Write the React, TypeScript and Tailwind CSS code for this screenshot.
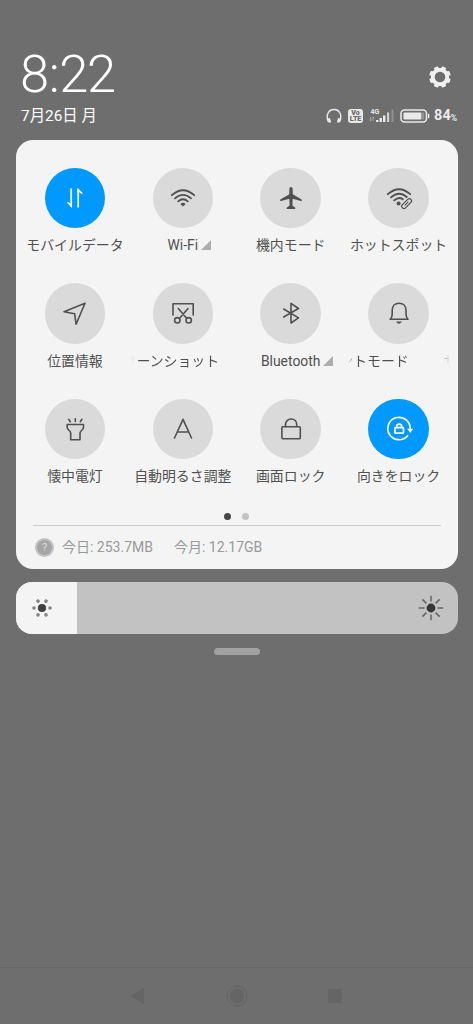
// src/App.tsx
import React from 'react';

interface Tile {
  label: string;
  icon: React.ReactNode;
  active?: boolean;
  expandable?: boolean;
  // Desplazamiento actual de la etiqueta cuando no cabe
  scroll?: string;
  next?: string;
}

const Icon: React.FC<{ children: React.ReactNode }> = ({ children }) => (
  <svg
    className="w-[30px] h-[30px]"
    viewBox="0 0 30 30"
    fill="none"
    stroke="currentColor"
    strokeWidth="1.6"
    strokeLinecap="round"
    strokeLinejoin="round"
  >
    {children}
  </svg>
);

const tiles: Tile[] = [
  {
    label: 'モバイルデータ',
    active: true,
    icon: (
      <Icon>
        <path d="M11.2 5.5V24M18.2 24.5V5.8" strokeWidth="1.7" strokeLinecap="butt" />
        <path d="M12 25v-5.500l-1.500 1.300-2.800-2-.7 1zM17.400 5v5.500l1.500-1.300 3.200 1.800.7-1z" fill="currentColor" stroke="none" />
      </Icon>
    ),
  },
  {
    label: 'Wi-Fi',
    expandable: true,
    icon: (
      <Icon>
        <path d="M3.8 12.2Q15 2.2 26.2 12.2M7 15.4Q15 8.4 23 15.4M10.2 18.4Q15 14.2 19.8 18.4" strokeWidth="1.8" />
        <path d="M15 23.6l-2.6-2.6Q15 18.4 17.6 21z" fill="currentColor" stroke="none" />
      </Icon>
    ),
  },
  {
    label: '機内モード',
    icon: (
      <Icon>
        <path
          d="M15 4c1.100 0 1.700 1.200 1.700 2.600v4.600l9 5.200v1.800l-9-2.500-.3 6.800 2.900 2.300v1.100h-8.600v-1.100l2.900-2.300-.3-6.800-9 2.500v-1.800l9-5.200V6.600c0-1.400.6-2.600 1.700-2.600z"
          fill="currentColor"
          stroke="none"
        />
      </Icon>
    ),
  },
  {
    label: 'ホットスポット',
    icon: (
      <Icon>
        <path d="M3.8 11.2Q15 1.2 26.2 11.2M7 14.4Q15 7.4 22.8 14M10.2 17.4Q15 13.2 18.8 16.2" strokeWidth="1.8" />
        <circle cx="14.6" cy="20.4" r="2" fill="currentColor" stroke="none" />
        <rect x="16.7" y="18.5" width="12" height="4.4" rx="2.2" transform="rotate(-45 22.5 20.7)" strokeWidth="1.2" />
        <path d="M21 22.2l3-3" strokeWidth="1.1" />
      </Icon>
    ),
  },
  {
    label: '位置情報',
    icon: (
      <Icon>
        <path d="M25 5.3L4 13.8l10.6 1.9 1.5 10.6z" />
      </Icon>
    ),
  },
  {
    label: 'スクリーンショット',
    scroll: '-translate-x-[37px]',
    icon: (
      <Icon>
        <path d="M5 17V5.7h20.2V17M10.3 10.5l8.3 9.7M20 10.5l-8.3 9.7" strokeWidth="1.6" />
        <circle cx="9.3" cy="22.3" r="2.7" />
        <circle cx="20.7" cy="22.3" r="2.7" />
      </Icon>
    ),
  },
  {
    label: 'Bluetooth',
    expandable: true,
    icon: (
      <Icon>
        <path d="M7.7 11L22.5 19.9 15 25V5.3l7.5 5.2L7.7 19" />
      </Icon>
    ),
  },
  {
    label: 'サイレントモード',
    scroll: '-translate-x-[50px]',
    next: 'サ',
    icon: (
      <Icon>
        <path d="M6.2 21.3h17.8c-1.5-1.6-2-2.8-2-4.8v-4.3c0-4.2-2.9-7-6.9-7s-6.9 2.8-6.9 7v4.3c0 2-.5 3.2-2 4.800z" />
        <path d="M12.3 23.5h5.400c-.5 1.400-1.500 2.200-2.700 2.200s-2.200-.8-2.700-2.200z" fill="currentColor" stroke="none" />
      </Icon>
    ),
  },
  {
    label: '懐中電灯',
    icon: (
      <Icon>
        <path d="M7.2 10.5h16.300v3c0 2.400-3.500 3.200-3.500 5.700v6.600h-9.300v-6.600c0-2.500-3.500-3.300-3.500-5.700z" />
        <path d="M15.3 4.700v2.800M8.700 5.300l1.600 2.400M21.900 5.300l-1.600 2.400" />
      </Icon>
    ),
  },
  {
    label: '自動明るさ調整',
    icon: (
      <Icon>
        <path d="M6.5 24L15 5.3 23.5 24M9.3 18h11.4" strokeWidth="1.6" />
      </Icon>
    ),
  },
  {
    label: '画面ロック',
    icon: (
      <Icon>
        <rect x="5.9" y="12.7" width="18.4" height="12" rx="1" />
        <path d="M9.5 12.5v-2c0-3.100 2.400-5.500 5.600-5.500s5.600 2.400 5.600 5.500v2" />
      </Icon>
    ),
  },
  {
    label: '向きをロック',
    active: true,
    icon: (
      <Icon>
        <path d="M23.6 21.7A11.2 11.2 0 1 1 26.2 14.5" strokeWidth="1.7" />
        <path d="M23.2 14.7h6l-3 4.3z" fill="currentColor" stroke="none" />
        <rect x="10.9" y="13.7" width="8.6" height="5.5" rx=".6" strokeWidth="1.7" />
        <path d="M12.7 13.500v-.9c0-1.500 1-2.500 2.500-2.500s2.500 1 2.500 2.500v.9" strokeWidth="1.6" />
      </Icon>
    ),
  },
];

const StatusIcons: React.FC = () => (
  <div className="flex items-center h-[18px] text-[#e9e9e9]">
    <svg className="w-4 h-4" viewBox="0 0 16 16" fill="none" stroke="currentColor" strokeWidth="1.4">
      <path d="M2.5 14C-.5 8 2 1.5 8 1.5S16.5 8 13.5 14" />
      <path d="M1.2 10.5l2.8-.5 1.2 4.3-2.5.5zM14.8 10.5L12 10l-1.200 4.300 2.500.5z" fill="currentColor" stroke="none" />
    </svg>
    <div className="ml-[6px] w-[15px] h-[14px] rounded-[3px] bg-[#e9e9e9] text-[#686868] font-black text-[7px] leading-[6px] text-center pt-px">
      <div>Vo</div>
      <div>LTE</div>
    </div>
    <svg className="ml-[6px] w-[26px] h-4" viewBox="0 0 26 16" fill="currentColor">
      <text x="1.5" y="5.5" fontSize="7" fontWeight="700">4G</text>
      <path d="M1.7 9v4l-1.2-1M4 13V9l1.2 1" fill="none" stroke="currentColor" strokeWidth=".8" opacity=".6" />
      <path d="M7 14v-2h2.4v2zM10.5 14v-4h2.4v4zM14 14V7.5h2.4V14z" />
      <path d="M18 14V4.5h2.2V14z" opacity=".8" />
      <path d="M22.5 14V1.5h2V14z" opacity=".3" />
    </svg>
    <svg className="ml-[5px] w-[30px] h-[14px]" viewBox="0 0 30 14">
      <rect x="1" y="1" width="25.5" height="12" rx="3.5" fill="none" stroke="currentColor" strokeWidth="1.6" />
      <rect x="3.5" y="3.5" width="18" height="7" rx="1" fill="currentColor" />
      <rect x="21.5" y="3.5" width="2.7" height="7" rx=".8" fill="#929292" />
      <path d="M28 4.8h.4a1 1 0 0 1 1 1v2.4a1 1 0 0 1-1 1H28z" fill="currentColor" />
    </svg>
    <span className="ml-[4px] text-[14.5px] leading-[18px] font-bold">84</span>
    <span className="text-[8.5px] leading-none font-bold mt-[5px]">%</span>
  </div>
);

const QuickTile: React.FC<{ tile: Tile }> = ({ tile }) => (
  <div className="flex flex-col items-center h-[115.6px]">
    <div
      className={
        tile.active
          ? 'w-[60.5px] h-[60.5px] shrink-0 rounded-full flex items-center justify-center bg-[#0099ff] text-white'
          : 'w-[60.5px] h-[60.5px] shrink-0 rounded-full flex items-center justify-center bg-[#dadada] text-[#505050]'
      }
    >
      {tile.icon}
    </div>
    {tile.scroll ? (
      <div className="mt-[7px] w-[102px] h-5 overflow-hidden text-[13.9px] leading-5 whitespace-nowrap text-[#505050] [mask-image:linear-gradient(to_right,transparent,black_8px,black_90px,transparent)]">
        <div className={`flex gap-[35px] ${tile.scroll}`}>
          <span>{tile.label}</span>
          {tile.next && <span aria-hidden="true">{tile.next}</span>}
        </div>
      </div>
    ) : (
      <div className="mt-[7px] h-5 flex items-center text-[13.9px] leading-5 whitespace-nowrap text-[#505050]">
        {tile.label}
        {tile.expandable && (
          <svg className="ml-[3px] -mr-[13px] w-[10px] h-[10px]" viewBox="0 0 10 10">
            <path d="M10 0v10H0z" fill="#adadad" />
          </svg>
        )}
      </div>
    )}
  </div>
);

const App: React.FC = () => {
  return (
    <div className="w-[473px] h-[1024px] flex flex-col bg-[#6e6e6e] overflow-hidden font-[Roboto,'Noto_Sans_CJK_JP',sans-serif]">
      {/* Cabecera */}
      <header className="h-[140px] shrink-0 pt-[46px] pl-[20px] pr-[16px] text-white">
        <div className="flex items-center justify-between h-[56px]">
          <div className="text-[52.5px] leading-[56px] font-light tracking-[-1.3px]">
            8<span className="mx-[0.8px]">:</span>22
          </div>
          <svg className="w-[22px] h-[22px] mr-[6px] mt-[6px]" viewBox="-11 -11 22 22" fill="#f0f0f0">
            {[22.5, 67.5, 112.5, 157.5, 202.5, 247.5, 292.5, 337.5].map((deg) => (
              <rect key={deg} x="-2.4" y="-10.8" width="4.8" height="4.5" rx="1.2" transform={`rotate(${deg})`} />
            ))}
            <circle r="7.2" fill="none" stroke="#f0f0f0" strokeWidth="3.8" />
          </svg>
        </div>
        <div className="flex items-center justify-between h-[28px]">
          <div className="pl-px text-[15.4px] leading-[20px]">7月26日 月</div>
          <StatusIcons />
        </div>
      </header>

      {/* Panel de ajustes rápidos */}
      <section className="mx-4 w-[441.5px] h-[429px] shrink-0 rounded-[17px] bg-[#f4f4f4] flex flex-col">
        <div className="grid grid-cols-4 px-[5px] pt-[27.5px]">
          {tiles.map((tile) => (
            <QuickTile key={tile.label} tile={tile} />
          ))}
        </div>
        <div className="flex justify-center gap-[11px] h-[7px] -mt-[1.5px]">
          <span className="w-[7px] h-[7px] rounded-full bg-[#454545]" />
          <span className="w-[7px] h-[7px] rounded-full bg-[#c3c3c3]" />
        </div>
        <div className="mx-[17px] mt-[5px] h-px bg-[#cccccc]" />
        <div className="flex items-center h-[43px] pl-[19px] text-[14px] text-[#999999]">
          <span className="w-[19px] h-[19px] rounded-full border-2 border-[#c2c2c2] bg-[#a5a5a5] text-[#dedede] text-[11px] leading-[15px] text-center">
            ?
          </span>
          <span className="ml-2">今日: 253.7MB</span>
          <span className="ml-[21px]">今月: 12.17GB</span>
        </div>
      </section>

      {/* Brillo */}
      <div className="mx-4 mt-[12.5px] w-[441.5px] h-[52.5px] shrink-0 rounded-[16px] bg-[#c2c2c2] overflow-hidden flex justify-between">
        <div className="w-[60.5px] h-full bg-[#f4f4f4] flex items-center pl-4">
          <svg className="w-5 h-5" viewBox="-10 -10 20 20" fill="#858585">
            <circle r="4.1" fill="#414141" />
            {[0, 60, 120, 180, 240, 300].map((deg) => (
              <circle key={deg} cx="8" cy="0" r="1.8" transform={`rotate(${deg})`} />
            ))}
          </svg>
        </div>
        <div className="h-full flex items-center pr-[13.5px]">
          <svg className="w-[26px] h-[26px]" viewBox="-13 -13 26 26" stroke="#666666" strokeWidth="1.5">
            <circle r="4.4" fill="#363636" stroke="none" />
            {[0, 45, 90, 135, 180, 225, 270, 315].map((deg) => (
              <path key={deg} d="M6.5 0H12.2" transform={`rotate(${deg})`} />
            ))}
          </svg>
        </div>
      </div>

      <div className="mt-[14px] ml-[213.5px] w-[46px] h-[7px] shrink-0 rounded-full bg-[#a2a2a2]" />

      {/* Barra de navegación */}
      <nav className="mt-auto h-[57px] shrink-0 border-t border-[#676767] flex items-center pl-[130px] text-[#656565]">
        <svg className="w-[14px] h-4" viewBox="0 0 14 16">
          <path d="M14 0v16L0 8z" fill="currentColor" />
        </svg>
        <svg className="ml-[82px] w-[22px] h-[22px]" viewBox="0 0 22 22">
          <circle cx="11" cy="11" r="10" fill="none" stroke="currentColor" />
          <circle cx="11" cy="11" r="7.3" fill="currentColor" />
        </svg>
        <div className="ml-[80px] w-[14px] h-[14px] bg-[#656565]" />
      </nav>
    </div>
  );
};

export default App;
